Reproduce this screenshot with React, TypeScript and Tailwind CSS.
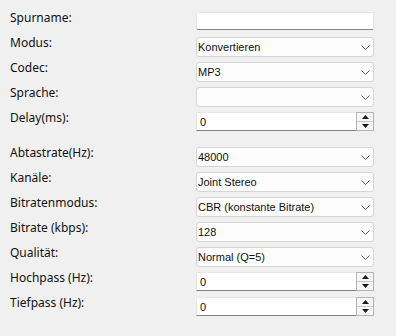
import React from 'react'

function Chevron() {
  return (
    <svg width="9" height="5" viewBox="0 0 9 5" className="shrink-0">
      <path d="M0.5 0.5 L4.5 4.5 L8.5 0.5" fill="none" stroke="#5f5f5f" strokeWidth="1" />
    </svg>
  )
}

function TextInput() {
  return <div className="h-[18px] w-[178px] bg-white border border-[#e4e4e4] border-b-[#868686] rounded-[2px]" />
}

function Combo({ value }: { value: string }) {
  return (
    <div className="h-[20px] w-[178px] bg-[#fdfdfd] border border-[#d5d5d5] rounded-[3px] flex items-center justify-between pl-[1px] pr-[3px] ctl">
      <span className="truncate pt-[1px]">{value}</span>
      <Chevron />
    </div>
  )
}

function Spin({ value }: { value: string }) {
  return (
    <div className="h-[19px] w-[178px] flex">
      <div className="flex-1 bg-white border-t border-l border-[#e6e6e6] border-b border-b-[#808080] flex items-center pl-[3px] pt-[1px] ctl">
        {value}
      </div>
      <div className="w-[18px] flex flex-col border border-[#b4b4b4] bg-[#f6f6f6]">
        <div className="flex-1 flex items-center justify-center border-b border-[#c8c8c8]">
          <svg width="7" height="4" viewBox="0 0 7 4">
            <path d="M0 4 L3.5 0 L7 4 Z" fill="#1a1a1a" />
          </svg>
        </div>
        <div className="flex-1 flex items-center justify-center">
          <svg width="7" height="4" viewBox="0 0 7 4">
            <path d="M0 0 L3.5 4 L7 0 Z" fill="#1a1a1a" />
          </svg>
        </div>
      </div>
    </div>
  )
}

function Row({ label, children }: { label: string; children: React.ReactNode }) {
  return (
    <div className="h-[25px] flex items-start">
      <div className="w-[186px] leading-[14px] -mt-[1px]">{label}</div>
      {children}
    </div>
  )
}

export default function App() {
  return (
    <div
      className="w-[396px] h-[336px] bg-[#f0f0f0] pl-[10px] pt-[12px] text-[12px] text-[#111] [&_.ctl]:font-['Liberation_Sans',Arial,sans-serif] [&_.ctl]:text-[11px]"
      style={{ fontFamily: '"Noto Sans", "Liberation Sans", sans-serif' }}
    >
      <Row label="Spurname:"><TextInput /></Row>
      <Row label="Modus:"><Combo value="Konvertieren" /></Row>
      <Row label="Codec:"><Combo value="MP3" /></Row>
      <Row label="Sprache:"><Combo value="" /></Row>
      <Row label="Delay(ms):"><Spin value="0" /></Row>
      <div className="mt-[10px]">
        <Row label="Abtastrate(Hz):"><Combo value="48000" /></Row>
        <Row label="Kanäle:"><Combo value="Joint Stereo" /></Row>
        <Row label="Bitratenmodus:"><Combo value="CBR (konstante Bitrate)" /></Row>
        <Row label="Bitrate (kbps):"><Combo value="128" /></Row>
        <Row label="Qualität:"><Combo value="Normal (Q=5)" /></Row>
        <Row label="Hochpass (Hz):"><Spin value="0" /></Row>
        <Row label="Tiefpass (Hz):"><Spin value="0" /></Row>
      </div>
    </div>
  )
}
